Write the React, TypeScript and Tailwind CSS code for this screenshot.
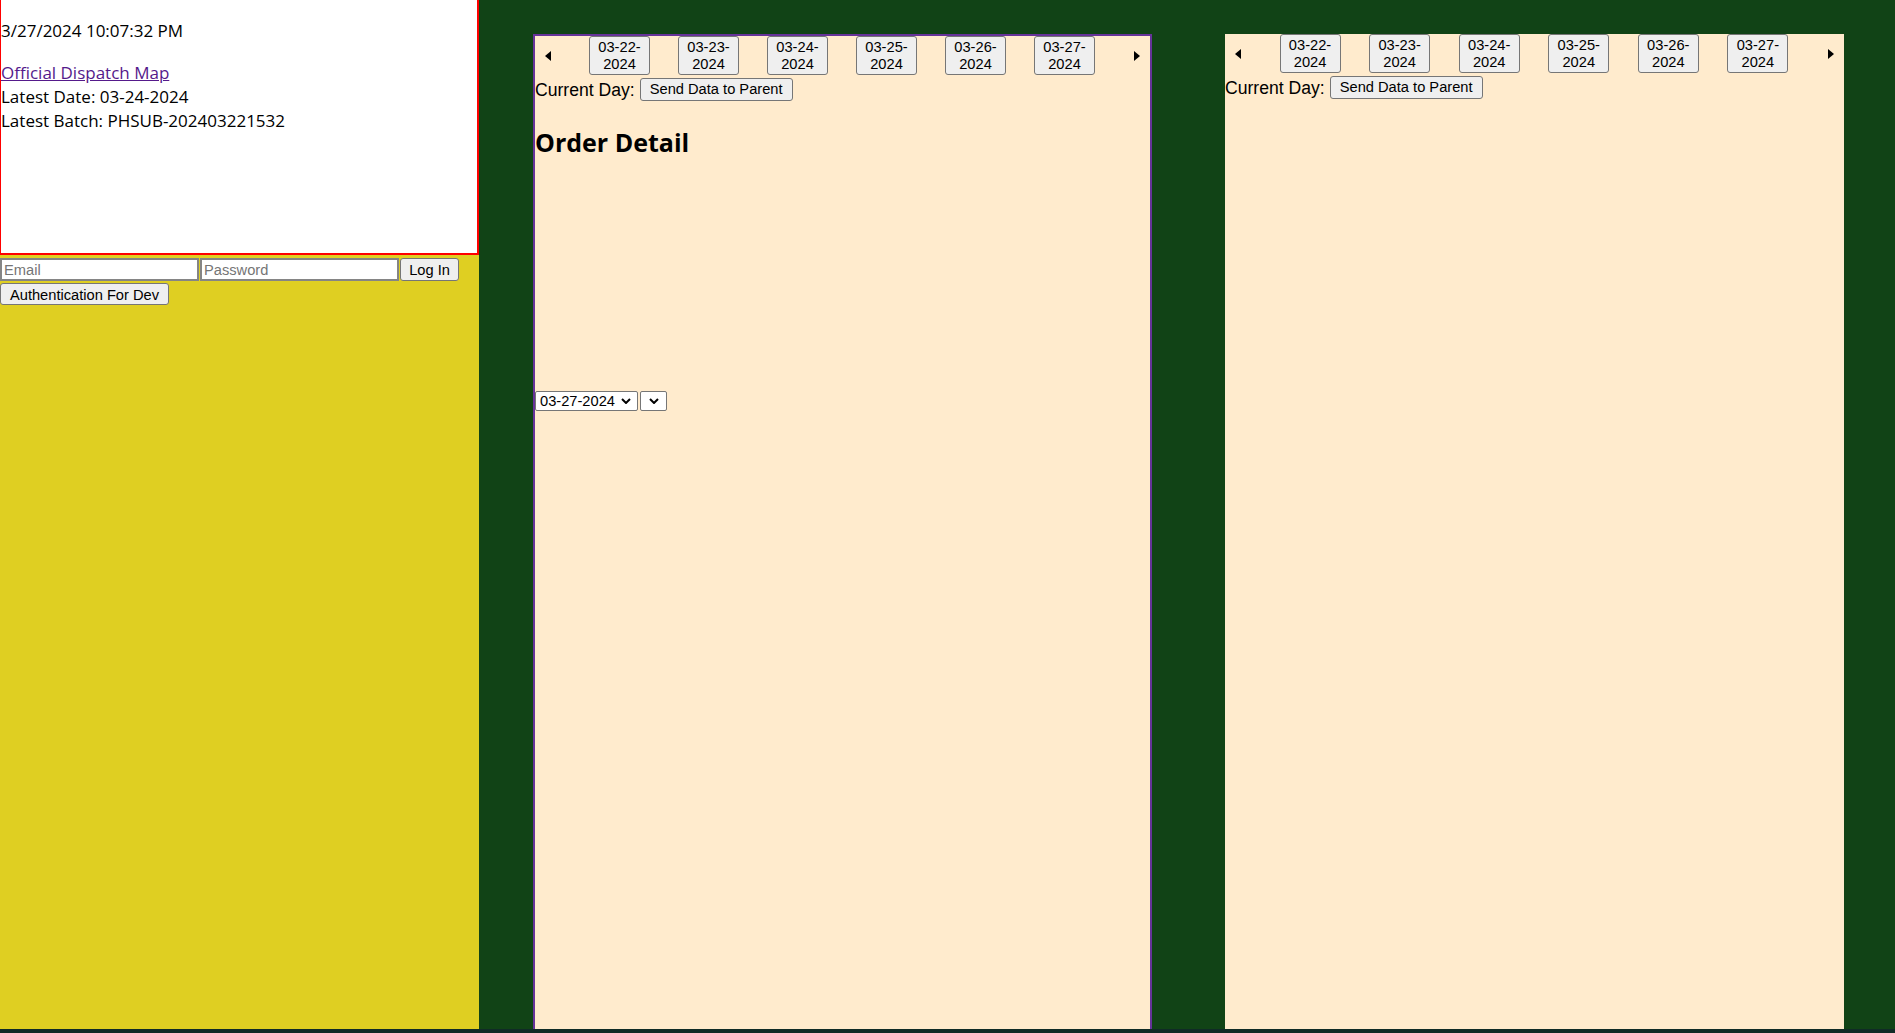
// App.tsx

const dates = ["03-22", "03-23", "03-24", "03-25", "03-26", "03-27"];

function Arrow({ dir }: { dir: "left" | "right" }) {
    return (
        <svg width="6" height="10" viewBox="0 0 6 10" className="block">
            <polygon points={dir === "left" ? "6,0 0,5 6,10" : "0,0 6,5 0,10"} fill="#000" />
        </svg>
    );
}

function Chevron() {
    return (
        <svg width="10" height="6" viewBox="0 0 10 6" className="block">
            <polyline points="1,1 5,5 9,1" fill="none" stroke="#000" strokeWidth="2" />
        </svg>
    );
}

function DayPicker() {
    return (
        <div className="font-['Liberation_Sans',Arial,sans-serif] text-black">
            {/* date carousel */}
            <div className="flex items-center">
                <div className="w-[26px] pl-[10px]">
                    <Arrow dir="left" />
                </div>
                <div className="flex flex-1 justify-evenly">
                    {dates.map((d) => (
                        <button
                            key={d}
                            className="flex h-[39px] w-[61px] flex-col items-center justify-center rounded-[3px] border border-[#767676] bg-[#efefef] text-[14.67px] leading-[17px]"
                        >
                            <span>{d}-</span>
                            <span>2024</span>
                        </button>
                    ))}
                </div>
                <div className="w-[27px] pl-[11px]">
                    <Arrow dir="right" />
                </div>
            </div>

            {/* current day */}
            <div className="mt-[3px] flex items-center gap-[5px]">
                <span className="text-[17.6px] leading-[20px]">Current Day:</span>
                <button className="h-[23px] rounded-[3px] border border-[#767676] bg-[#efefef] px-[9px] text-[14.67px] leading-[17px]">
                    Send Data to Parent
                </button>
            </div>
        </div>
    );
}

export default function App() {
    return (
        <div className="h-[1033px] w-[1895px] overflow-hidden bg-[#114316]">
            <div className="flex h-[1029px] items-start overflow-hidden">
                {/* left column */}
                <div className="h-full w-[479px] shrink-0 bg-[#dfcf22]">
                    <div className="h-[255px] border-b-2 border-l border-r-2 border-[#ff0000] bg-white font-['Open_Sans',sans-serif] text-[17px] leading-[24px] text-black">
                        <p className="mb-[18px] pt-[19px]">3/27/2024 10:07:32 PM</p>
                        <a href="#" className="text-[#551a8b] underline">
                            Official Dispatch Map
                        </a>
                        <div>Latest Date: 03-24-2024</div>
                        <div>Latest Batch: PHSUB-202403221532</div>
                    </div>

                    <div className="mt-[3px] font-['Liberation_Sans',Arial,sans-serif] text-[14.67px]">
                        <div className="flex items-center gap-[1px]">
                            <input
                                type="text"
                                placeholder="Email"
                                className="h-[23px] w-[199px] border-2 border-[#858585] bg-white px-[2px] text-black placeholder:text-[#757575] focus:outline-none"
                            />
                            <input
                                type="password"
                                placeholder="Password"
                                className="h-[23px] w-[199px] border-2 border-[#858585] bg-white px-[2px] text-black placeholder:text-[#757575] focus:outline-none"
                            />
                            <button className="h-[23px] w-[59px] rounded-[3px] border border-[#767676] bg-[#efefef] text-black">
                                Log In
                            </button>
                        </div>
                        <button className="mt-[2px] h-[22px] w-[169px] rounded-[3px] border border-[#767676] bg-[#efefef] text-black">
                            Authentication For Dev
                        </button>
                    </div>
                </div>

                {/* order detail panel */}
                <div className="ml-[54px] mt-[34px] h-[1100px] w-[619px] shrink-0 border-2 border-[#663399] bg-[#ffebcd]">
                    <DayPicker />
                    <h2 className="mt-[24px] font-['Open_Sans',sans-serif] text-[25px] font-bold leading-[35px] text-black">
                        Order Detail
                    </h2>
                    <div className="mt-[231px] flex items-center gap-[2px] font-['Liberation_Sans',Arial,sans-serif] text-[14.67px] text-black">
                        <div className="flex h-[20px] w-[103px] items-center justify-between rounded-[2px] border border-[#767676] bg-white pl-[4px] pr-[6px]">
                            <span>03-27-2024</span>
                            <Chevron />
                        </div>
                        <div className="flex h-[20px] w-[27px] items-center justify-center rounded-[2px] border border-[#767676] bg-white">
                            <Chevron />
                        </div>
                    </div>
                </div>

                {/* second panel */}
                <div className="ml-[73px] mt-[34px] h-[1100px] w-[619px] shrink-0 bg-[#ffebcd]">
                    <DayPicker />
                </div>
            </div>
            <div className="h-[4px] bg-[#102b26]" />
        </div>
    );
}
